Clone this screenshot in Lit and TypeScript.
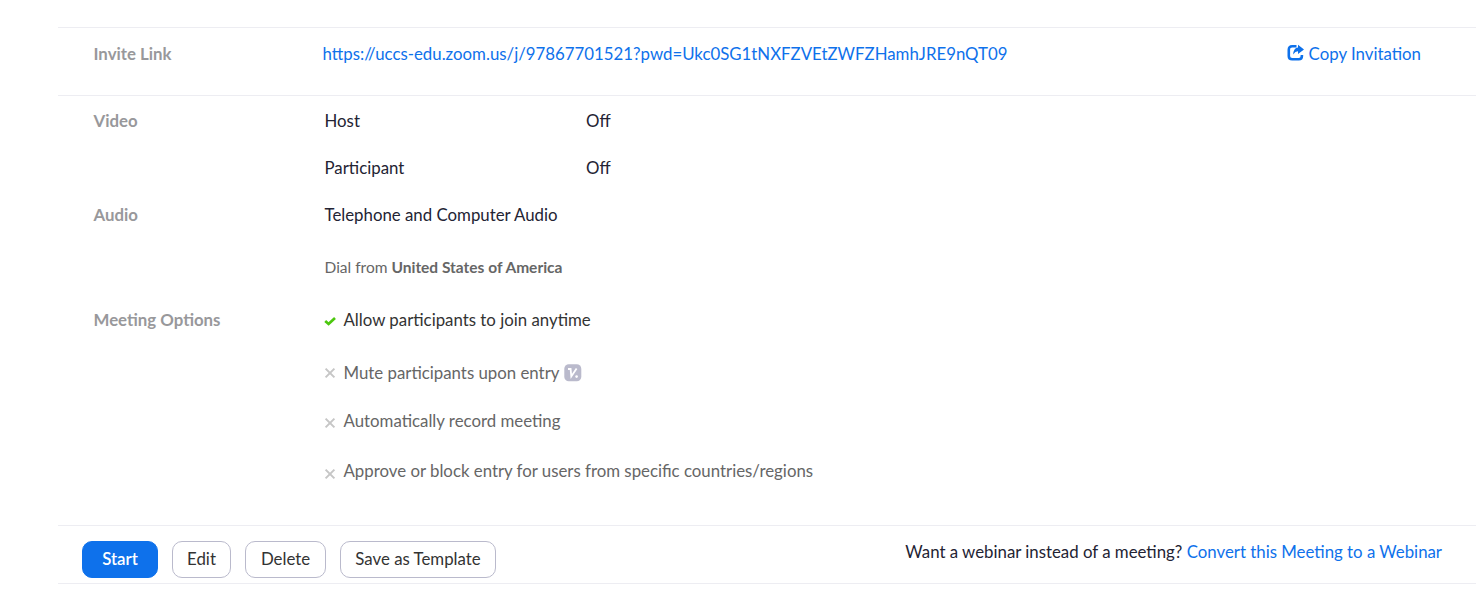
import { LitElement, html, css } from "lit";
import { customElement } from "lit/decorators.js";

const check = html`<svg class="mark" viewBox="0 0 12 12" width="12" height="12"><path d="M1.2 6 4.6 9 11 3" fill="none" stroke="#4cc70e" stroke-width="2.7"/></svg>`;
const cross = html`<svg class="mark" viewBox="0 0 12 12" width="12" height="12"><path d="M1.6 1.6 10.4 10.4M10.4 1.6 1.6 10.4" fill="none" stroke="#c6c6c6" stroke-width="2"/></svg>`;

@customElement("app-root")
export class AppRoot extends LitElement {
  static styles = css`
    :host { display: block; height: 589px; overflow: hidden; background: #fff; box-sizing: border-box; padding: 27px 1px 0 58px;
      font-family: Lato, sans-serif; font-size: 16.82px; line-height: 24px; color: #232333; white-space: nowrap; }
    .section { border-top: 1px solid #ededf2; box-sizing: border-box; }
    .invite { height: 68px; display: flex; padding: 14px 55px 0 35.5px; }
    .label { width: 231px; flex: none; font-weight: 700; color: #98989b; }
    .link { color: #0e71eb; text-decoration: none; }
    .url { flex: 1; margin-left: -2px; }
    .copy { display: flex; gap: 5px; }
    .copy svg { margin-top: 2px; }
    .details { height: 430px; padding: 13px 0 0 35.5px; }
    .row { display: flex; }
    .video { height: 94px; }
    .audio { height: 105px; }
    .col { display: flex; flex-direction: column; }
    .video .col { gap: 23px; }
    .pair { display: grid; grid-template-columns: 261.5px auto; }
    .audio .col { gap: 28px; }
    .dial { font-size: 15.5px; color: #666; }
    .option { display: flex; align-items: flex-start; color: #666; }
    .option.on { color: #333; height: 53px; }
    .option.mute { height: 48px; }
    .option.record { height: 50px; }
    .mark { margin: 6px 7.5px 0 -.5px; flex: none; }
    .on .mark { margin-top: 7px; }
    .record .mark { margin-top: 8px; }
    .approve .mark { margin-top: 9px; }
    .badge { margin: 3px 0 0 4.5px; }
    .footer { height: 59px; border-bottom: 1px solid #ededf2; display: flex; justify-content: space-between; padding: 15px 34px 0 24px; }
    .buttons { display: flex; gap: 14px; }
    .ask { margin-top: -1px; }
    button { font: inherit; height: 37px; box-sizing: border-box; padding: 0 0 2px; border: 1px solid #babacc; border-radius: 10px; background: #fff; color: #333; }
    .start { width: 76px; background: #0e71eb; border-color: #0e71eb; color: #fff; font-weight: 600; }
    .edit { width: 59px; }
    .delete { width: 81px; }
    .save { width: 156px; }
  `;

  render() {
    return html`
      <div class="section invite">
        <div class="label">Invite Link</div>
        <div class="url"><a class="link">https://uccs-edu.zoom.us/j/97867701521?pwd=Ukc0SG1tNXFZVEtZWFZHamhJRE9nQT09</a></div>
        <a class="link copy">
          <svg viewBox="0 0 17 17" width="17" height="17"><path d="M9.5 2.3H5.2Q1.8 2.3 1.8 5.7V12Q1.8 15.2 5.2 15.2H11.8Q14.9 15.2 14.9 12V11" fill="none" stroke="#0e71eb" stroke-width="2.6"/><path d="M11 .8 17 5.4 11 10V7.3Q8.3 7.2 6.2 10.4 6.5 4 11 3.5Z" fill="#0e71eb"/></svg>
          <span>Copy Invitation</span>
        </a>
      </div>
      <div class="section details">
        <div class="row video">
          <div class="label">Video</div>
          <div class="col">
            <div class="pair"><span>Host</span><span>Off</span></div>
            <div class="pair"><span>Participant</span><span>Off</span></div>
          </div>
        </div>
        <div class="row audio">
          <div class="label">Audio</div>
          <div class="col">
            <div>Telephone and Computer Audio</div>
            <div class="dial">Dial from <b>United States of America</b></div>
          </div>
        </div>
        <div class="row">
          <div class="label">Meeting Options</div>
          <div class="col">
            <div class="option on">${check}<span>Allow participants to join anytime</span></div>
            <div class="option mute">${cross}<span>Mute participants upon entry</span>
              <svg class="badge" viewBox="0 0 18 18" width="18" height="18"><rect x=".3" y=".3" width="17" height="17" rx="4.5" fill="#babacc"/><path d="M4 5H6.6L7.3 12.4 12.6 4.4" fill="none" stroke="#fff" stroke-width="1.8"/><circle cx="12.6" cy="12.6" r="1.3" fill="#fff"/></svg>
            </div>
            <div class="option record">${cross}<span>Automatically record meeting</span></div>
            <div class="option approve">${cross}<span>Approve or block entry for users from specific countries/regions</span></div>
          </div>
        </div>
      </div>
      <div class="section footer">
        <div class="buttons">
          <button class="start">Start</button>
          <button class="edit">Edit</button>
          <button class="delete">Delete</button>
          <button class="save">Save as Template</button>
        </div>
        <div class="ask">Want a webinar instead of a meeting? <a class="link">Convert this Meeting to a Webinar</a></div>
      </div>`;
  }
}
